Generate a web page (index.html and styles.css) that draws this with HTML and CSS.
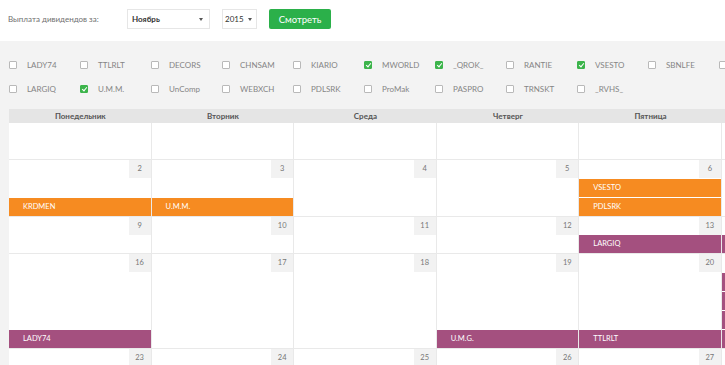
FILE: index.html
```html
<!DOCTYPE html>
<html lang="ru">
<head>
    <meta charset="UTF-8">
    <title>Календарь дивидендов</title>
    <link rel="stylesheet" href="styles.css">
</head>
<body>

<div class="toolbar">
    <span class="toolbar-label">Выплата дивидендов за:</span>
    <div class="select month-select">
        <span>Ноябрь</span>
        <span class="caret"></span>
    </div>
    <div class="select year-select">
        <span>2015</span>
        <span class="caret"></span>
    </div>
    <button class="show-btn">Смотреть</button>
</div>

<div class="main">
    <div class="filters">
        <label class="filter"><span class="box"></span>LADY74</label>
        <label class="filter"><span class="box"></span>TTLRLT</label>
        <label class="filter"><span class="box"></span>DECORS</label>
        <label class="filter"><span class="box"></span>CHNSAM</label>
        <label class="filter"><span class="box"></span>KIARIO</label>
        <label class="filter"><span class="box checked"></span>MWORLD</label>
        <label class="filter"><span class="box checked"></span>_QROK_</label>
        <label class="filter"><span class="box"></span>RANTIE</label>
        <label class="filter"><span class="box checked"></span>VSESTO</label>
        <label class="filter"><span class="box"></span>SBNLFE</label>
        <label class="filter"><span class="box"></span>KRDMEN</label>
        <label class="filter"><span class="box"></span>U.M.G.</label>
        <label class="filter"><span class="box"></span>MOST</label>
        <label class="filter"><span class="box"></span>OMZZ</label>
        <label class="filter"><span class="box"></span>LARGIQ</label>
        <label class="filter"><span class="box checked"></span>U.M.M.</label>
        <label class="filter"><span class="box"></span>UnComp</label>
        <label class="filter"><span class="box"></span>WEBXCH</label>
        <label class="filter"><span class="box"></span>PDLSRK</label>
        <label class="filter"><span class="box"></span>ProMak</label>
        <label class="filter"><span class="box"></span>PASPRO</label>
        <label class="filter"><span class="box"></span>TRNSKT</label>
        <label class="filter"><span class="box"></span>_RVHS_</label>
    </div>

    <div class="calendar">
        <div class="cal-head">
            <div>Понедельник</div>
            <div>Вторник</div>
            <div>Среда</div>
            <div>Четверг</div>
            <div>Пятница</div>
            <div>Суббота</div>
            <div>Воскресенье</div>
        </div>

        <!-- week 1 -->
        <div class="week">
            <div class="day"><div class="num blank"></div><div class="slot first"></div></div>
            <div class="day"><div class="num blank"></div></div>
            <div class="day"><div class="num blank"></div></div>
            <div class="day"><div class="num blank"></div></div>
            <div class="day"><div class="num blank"></div></div>
            <div class="day"><div class="num blank"></div></div>
            <div class="day"><div class="num">1</div></div>
        </div>

        <!-- week 2 -->
        <div class="week">
            <div class="day"><div class="num">2</div><div class="slot"></div><div class="ev orange">KRDMEN</div></div>
            <div class="day"><div class="num">3</div><div class="slot"></div><div class="ev orange">U.M.M.</div></div>
            <div class="day"><div class="num">4</div></div>
            <div class="day"><div class="num">5</div></div>
            <div class="day"><div class="num">6</div><div class="ev orange">VSESTO</div><div class="ev orange">PDLSRK</div></div>
            <div class="day"><div class="num">7</div></div>
            <div class="day"><div class="num">8</div></div>
        </div>

        <!-- week 3 -->
        <div class="week">
            <div class="day"><div class="num">9</div></div>
            <div class="day"><div class="num">10</div></div>
            <div class="day"><div class="num">11</div></div>
            <div class="day"><div class="num">12</div></div>
            <div class="day"><div class="num">13</div><div class="ev purple first">LARGIQ</div></div>
            <div class="day"><div class="num">14</div><div class="ev purple first">MWORLD</div></div>
            <div class="day"><div class="num">15</div></div>
        </div>

        <!-- week 4 -->
        <div class="week">
            <div class="day"><div class="num">16</div><div class="slot"></div><div class="slot"></div><div class="slot"></div><div class="ev purple">LADY74</div></div>
            <div class="day"><div class="num">17</div></div>
            <div class="day"><div class="num">18</div></div>
            <div class="day"><div class="num">19</div><div class="slot"></div><div class="slot"></div><div class="slot"></div><div class="ev purple">U.M.G.</div></div>
            <div class="day"><div class="num">20</div><div class="slot"></div><div class="slot"></div><div class="slot"></div><div class="ev purple">TTLRLT</div></div>
            <div class="day"><div class="num">21</div><div class="ev purple">_QROK_</div><div class="ev purple">SBNLFE</div><div class="ev purple">DECORS</div><div class="ev purple">CHNSAM</div></div>
            <div class="day"><div class="num">22</div></div>
        </div>

        <!-- week 5 -->
        <div class="week">
            <div class="day"><div class="num">23</div><div class="slot"></div></div>
            <div class="day"><div class="num">24</div></div>
            <div class="day"><div class="num">25</div></div>
            <div class="day"><div class="num">26</div></div>
            <div class="day"><div class="num">27</div></div>
            <div class="day"><div class="num">28</div></div>
            <div class="day"><div class="num">29</div></div>
        </div>
    </div>
</div>

</body>
</html>
```

FILE: styles.css
```css
* {
    margin: 0;
    padding: 0;
    box-sizing: border-box;
}

body {
    font-family: Lato, 'Open Sans', sans-serif;
    background-color: #ffffff;
    color: #555;
    overflow: hidden;
}

/* top bar */

.toolbar {
    height: 41px;
    display: flex;
    align-items: center;
    padding: 0 8px;
    padding-bottom: 3px;
}

.toolbar-label {
    width: 119px;
    font-size: 8px;
    color: #707070;
}

.select {
    height: 20px;
    display: flex;
    align-items: center;
    justify-content: space-between;
    border: 1px solid #e6e6e6;
    background-color: #fff;
    font-size: 8px;
    color: #333;
    margin-right: 12px;
}

.month-select {
    width: 83px;
    padding: 0 6px 0 4px;
    font-weight: bold;
}

.year-select {
    width: 35px;
    padding: 0 4px 0 2px;
}

.caret {
    width: 0;
    height: 0;
    border-left: 2.5px solid transparent;
    border-right: 2.5px solid transparent;
    border-top: 3px solid #555;
}

.show-btn {
    width: 62px;
    height: 20px;
    border: none;
    border-radius: 2px;
    background-color: #2bb04a;
    color: white;
    font-family: Lato, sans-serif;
    font-size: 9.5px;
}

/* filter + calendar area */

.main {
    background-color: #f3f3f3;
    min-height: 400px;
    padding-left: 9px;
}

.filters {
    width: 1000px;
    display: flex;
    flex-wrap: wrap;
    row-gap: 12px;
    padding: 18px 0 14px 0;
}

.filter {
    width: 71px;
    height: 12px;
    display: flex;
    align-items: center;
    gap: 10px;
    font-size: 8px;
    color: #858585;
}

.box {
    width: 8px;
    height: 8px;
    border: 1px solid #b9b9b9;
    border-radius: 1px;
    background-color: #fff;
    position: relative;
}

.box.checked {
    background-color: #3cb44b;
    border-color: #3cb44b;
}

.box.checked::after {
    content: "";
    position: absolute;
    left: 2px;
    top: 0px;
    width: 2px;
    height: 4px;
    border: solid white;
    border-width: 0 1.2px 1.2px 0;
    transform: rotate(40deg);
}

.calendar {
    width: 998px;
}

.cal-head {
    display: grid;
    grid-template-columns: repeat(7, 1fr);
    height: 14px;
    background-color: #e5e5e5;
    font-size: 8px;
    font-weight: bold;
    color: #555;
    text-align: center;
    line-height: 14px;
}

.week {
    display: grid;
    grid-template-columns: repeat(7, 1fr);
    border-bottom: 1px solid #e9e9e9;
    background-color: #fff;
}

.day {
    display: flex;
    flex-direction: column;
    border-right: 1px solid #e9e9e9;
}

.num {
    align-self: flex-end;
    width: 22px;
    height: 18px;
    background-color: #f2f2f2;
    font-size: 7.5px;
    color: #777;
    text-align: center;
    line-height: 18px;
}

.num.blank {
    background-color: transparent;
}

.slot {
    height: 18px;
    margin-top: 1px;
}

.ev {
    height: 18px;
    margin-top: 1px;
    padding-left: 14px;
    font-size: 7.5px;
    line-height: 18px;
    color: white;
}

.slot.first, .ev.first {
    margin-top: 0;
}

.orange {
    background-color: #f68b21;
}

.purple {
    background-color: #a4507f;
}
```
